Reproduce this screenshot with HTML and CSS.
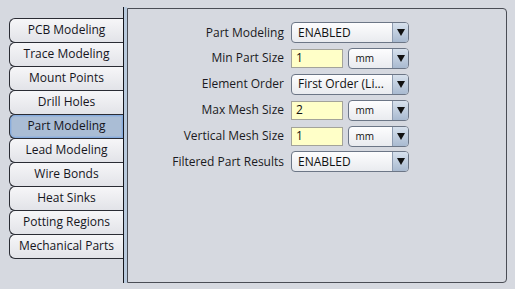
FILE: index.html
```
<!DOCTYPE html>
<html>
<head>
<meta charset="utf-8">
<link rel="stylesheet" href="styles.css">
</head>
<body>
<div class="app">
  <nav class="tabs">
    <div class="tab">PCB Modeling</div>
    <div class="tab">Trace Modeling</div>
    <div class="tab">Mount Points</div>
    <div class="tab">Drill Holes</div>
    <div class="tab active">Part Modeling</div>
    <div class="tab">Lead Modeling</div>
    <div class="tab">Wire Bonds</div>
    <div class="tab">Heat Sinks</div>
    <div class="tab">Potting Regions</div>
    <div class="tab">Mechanical Parts</div>
  </nav>
  <div class="rail"></div>
  <section class="panel">
    <div class="form">
      <label class="lbl">Part Modeling</label>
      <div class="ctl"><div class="select full"><span class="val">ENABLED</span><span class="btn"><svg width="8" height="7" viewBox="0 0 8 7"><path d="M0 0H8L4 7Z" fill="#111"/></svg></span></div></div>

      <label class="lbl">Min Part Size</label>
      <div class="ctl"><div class="input">1</div><div class="select unit"><span class="val small">mm</span><span class="btn"><svg width="8" height="7" viewBox="0 0 8 7"><path d="M0 0H8L4 7Z" fill="#111"/></svg></span></div></div>

      <label class="lbl">Element Order</label>
      <div class="ctl"><div class="select full"><span class="val">First Order (Li...</span><span class="btn"><svg width="8" height="7" viewBox="0 0 8 7"><path d="M0 0H8L4 7Z" fill="#111"/></svg></span></div></div>

      <label class="lbl">Max Mesh Size</label>
      <div class="ctl"><div class="input">2</div><div class="select unit"><span class="val small">mm</span><span class="btn"><svg width="8" height="7" viewBox="0 0 8 7"><path d="M0 0H8L4 7Z" fill="#111"/></svg></span></div></div>

      <label class="lbl">Vertical Mesh Size</label>
      <div class="ctl"><div class="input">1</div><div class="select unit"><span class="val small">mm</span><span class="btn"><svg width="8" height="7" viewBox="0 0 8 7"><path d="M0 0H8L4 7Z" fill="#111"/></svg></span></div></div>

      <label class="lbl">Filtered Part Results</label>
      <div class="ctl"><div class="select full"><span class="val">ENABLED</span><span class="btn"><svg width="8" height="7" viewBox="0 0 8 7"><path d="M0 0H8L4 7Z" fill="#111"/></svg></span></div></div>
    </div>
  </section>
</div>
</body>
</html>
```
FILE: styles.css
```
* { box-sizing: border-box; }
html, body {
  margin: 0;
  padding: 0;
  background: #d6d9e0;
  font-family: "Open Sans", "DejaVu Sans", sans-serif;
  font-size: 12px;
  color: #1c1c24;
}
.app {
  display: flex;
  align-items: flex-start;
  width: 515px;
  height: 289px;
  padding: 7px 0 0 9px;
}
.tabs {
  display: flex;
  flex-direction: column;
  width: 114px;
  margin-top: 11px;
}
.tab {
  height: 25px;
  margin-bottom: -1px;
  border: 1px solid #2a2c34;
  border-right: none;
  border-radius: 6px 0 0 6px;
  background: linear-gradient(#f6f6f8, #e2e3e8);
  display: flex;
  align-items: center;
  justify-content: center;
  line-height: 1;
  padding-bottom: 1px;
  color: #15151c;
}
.tab.active {
  background: #aabdd5;
  box-shadow: inset 0 0 0 1px #86abdd, inset 0 0 0 2px #9cb6d8;
}
.rail {
  width: 4px;
  height: 276px;
  border-left: 1px solid #15171e;
  background: #b9cadd;
}
.panel {
  width: 380px;
  height: 275px;
  margin-top: 1px;
  border: 1px solid #4a4d55;
  border-radius: 0 4px 4px 0;
  padding: 13px 0 0 0;
}
.form {
  display: grid;
  grid-template-columns: 156px 118px;
  column-gap: 7px;
  grid-auto-rows: 21px;
  row-gap: 4.9px;
}
.lbl {
  text-align: right;
  align-self: center;
  white-space: nowrap;
  line-height: 1;
  color: #1a1a22;
}
.ctl {
  display: flex;
  align-items: center;
  gap: 5px;
}
.select {
  height: 21px;
  display: flex;
  border: 1px solid #6c7686;
  border-radius: 4px;
  background: linear-gradient(#fdfdfe, #e9ebef);
  overflow: hidden;
}
.select.full { width: 118px; }
.select.unit { width: 62px; }
.val {
  flex: 1;
  padding-left: 6px;
  display: flex;
  align-items: center;
  white-space: nowrap;
  overflow: hidden;
  color: #111;
  line-height: 1;
}
.val.small { font-size: 10px; padding-left: 7px; }
.btn {
  width: 16px;
  border-left: 1px solid #8d9bb0;
  background: linear-gradient(#d7e1ed, #a9bad0);
  display: flex;
  align-items: center;
  justify-content: center;
}
.input {
  width: 52px;
  height: 19px;
  border: 1px solid #a3a39a;
  background: #ffffc8;
  padding-left: 4px;
  display: flex;
  align-items: center;
  color: #111;
  line-height: 1;
}
```
